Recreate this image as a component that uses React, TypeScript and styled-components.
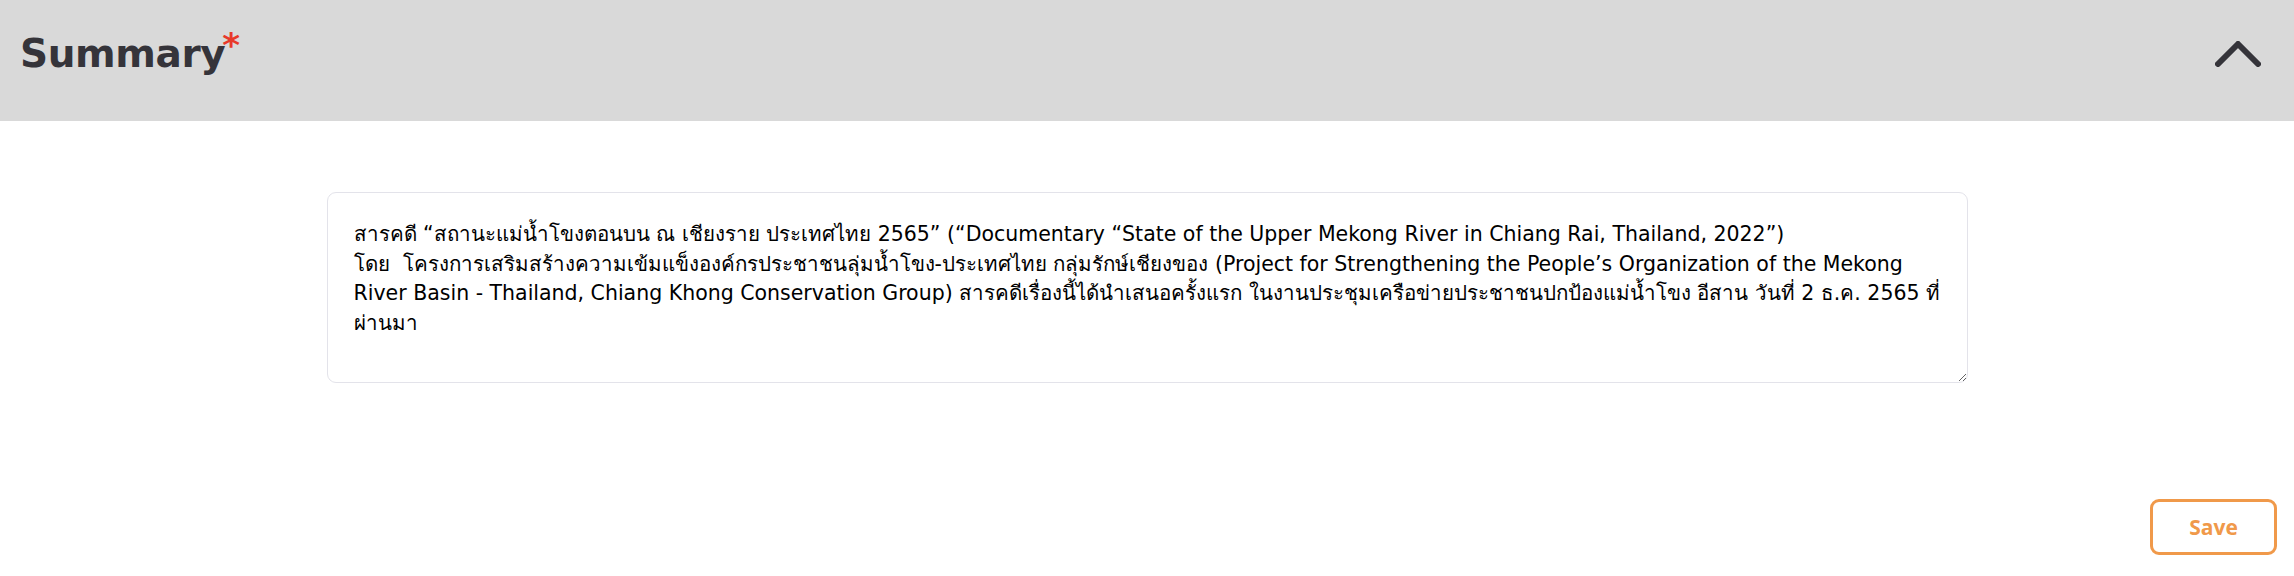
import React from "react";
import styled, { createGlobalStyle } from "styled-components";

const GlobalStyle = createGlobalStyle`
  html, body { margin: 0; padding: 0; background: #ffffff; }
  body { font-family: "Open Sans", "Noto Sans", sans-serif; }
`;

const Page = styled.div`
  display: flex;
  flex-direction: column;
  width: 2294px;
  height: 576px;
  background: #ffffff;
`;

const Header = styled.header`
  display: flex;
  align-items: center;
  justify-content: space-between;
  height: 121px;
  padding: 0 33px 14px 20px;
  box-sizing: border-box;
  background: #d9d9d9;
`;

const Title = styled.h2`
  margin: 0 0 9px;
  font-family: "DejaVu Sans", sans-serif;
  font-weight: 700;
  font-size: 39px;
  line-height: 48px;
  letter-spacing: -0.4px;
  color: #35343a;
`;

const Required = styled.span`
  margin-left: -3px;
  color: #e8392a;
  font-size: 34px;
  font-weight: 700;
  vertical-align: 10px;
`;

const ToggleButton = styled.button`
  display: flex;
  align-items: center;
  justify-content: center;
  background: none;
  border: none;
  padding: 0;
  cursor: pointer;
`;

const Body = styled.main`
  display: flex;
  justify-content: center;
  padding-top: 71px;
`;

const SummaryField = styled.textarea`
  width: 1641px;
  height: 191px;
  box-sizing: border-box;
  padding: 27px 14px 20px 26px;
  border: 1px solid #e3e3ea;
  border-radius: 9px;
  font-family: "DejaVu Sans", "Open Sans", sans-serif;
  font-weight: 400;
  font-size: 20.5px;
  line-height: 29.5px;
  color: #000000;
  resize: vertical;
  outline: none;
`;

const Footer = styled.footer`
  display: flex;
  justify-content: flex-end;
  padding: 116px 17px 0 0;
`;

const SaveButton = styled.button`
  width: 127px;
  height: 56px;
  box-sizing: border-box;
  border: 3px solid #f0994a;
  border-radius: 9px;
  background: #ffffff;
  color: #f0994a;
  font-family: "Open Sans", sans-serif;
  font-weight: 700;
  font-size: 21px;
  cursor: pointer;
`;

const summary =
  "สารคดี “สถานะแม่น้ำโขงตอนบน ณ เชียงราย ประเทศไทย 2565” (“Documentary “State of the Upper Mekong River in Chiang Rai, Thailand, 2022”)\nโดย  โครงการเสริมสร้างความเข้มแข็งองค์กรประชาชนลุ่มน้ำโขง-ประเทศไทย กลุ่มรักษ์เชียงของ (Project for Strengthening the People’s Organization of the Mekong River Basin - Thailand, Chiang Khong Conservation Group) สารคดีเรื่องนี้ได้นำเสนอครั้งแรก ในงานประชุมเครือข่ายประชาชนปกป้องแม่น้ำโขง อีสาน วันที่ 2 ธ.ค. 2565 ที่ผ่านมา";

export default function App() {
  return (
    <>
      <GlobalStyle />
      <Page>
        <Header>
          <Title>
            Summary<Required>*</Required>
          </Title>
          <ToggleButton aria-label="Collapse">
            <svg width="46" height="26" viewBox="0 0 46 26" fill="none">
              <path
                d="M3 23 L23 3 L43 23"
                stroke="#35343a"
                strokeWidth="6"
                strokeLinecap="round"
                strokeLinejoin="round"
              />
            </svg>
          </ToggleButton>
        </Header>
        <Body>
          <SummaryField defaultValue={summary} />
        </Body>
        <Footer>
          <SaveButton>Save</SaveButton>
        </Footer>
      </Page>
    </>
  );
}
